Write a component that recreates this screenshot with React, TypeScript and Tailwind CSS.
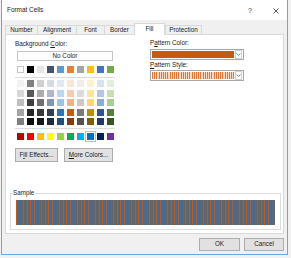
import React from "react";

const theme = ["#ffffff", "#000000", "#e7e6e6", "#44546a", "#5b9bd5", "#ed7d31", "#a5a5a5", "#ffc000", "#4472c4", "#70ad47"];
const tints = [
  ["#f2f2f2", "#808080", "#d0cece", "#d6dce4", "#deebf6", "#fbe5d5", "#ededed", "#fff2cc", "#d9e2f3", "#e2efd9"],
  ["#d8d8d8", "#595959", "#aeabab", "#adb9ca", "#bdd7ee", "#f7cbac", "#dbdbdb", "#fee599", "#b4c6e7", "#c5e0b3"],
  ["#bfbfbf", "#3f3f3f", "#757070", "#8496b0", "#9cc3e5", "#f4b183", "#c9c9c9", "#ffd965", "#8eaadb", "#a8d08d"],
  ["#a5a5a5", "#262626", "#3a3838", "#323f4f", "#2e75b5", "#c55a11", "#7b7b7b", "#bf9000", "#2f5496", "#538135"],
  ["#7f7f7f", "#0c0c0c", "#171616", "#222a35", "#1e4e79", "#833c0b", "#525252", "#7f6000", "#1f3864", "#375623"],
];
const standard = ["#c00000", "#ff0000", "#ffc000", "#ffff00", "#92d050", "#00b050", "#00b0f0", "#0070c0", "#002060", "#7030a0"];

function Swatch({ color, selected }: { color: string; selected?: boolean }) {
  const light = color === "#ffffff";
  return (
    <div
      className={
        "w-[7px] h-[7px] shrink-0 " +
        (light ? "border border-[#c6c6c6] " : "") +
        (selected ? "shadow-[0_0_0_1px_#ffffff,0_0_0_2px_#9cc8ef]" : "")
      }
      style={{ backgroundColor: color }}
    />
  );
}

function Chevron() {
  return (
    <svg width="5" height="3" viewBox="0 0 5 3">
      <polyline points="0.5,0.5 2.5,2.5 4.5,0.5" fill="none" stroke="#6a6a6a" strokeWidth="0.8" />
    </svg>
  );
}

function Combo({ fill }: { fill: string }) {
  return (
    <div className="w-[94px] h-[11px] border border-[#a9a9a9] bg-white flex items-stretch p-px gap-px">
      <div className={"flex-1 " + fill} />
      <div className="w-[7px] border border-[#d0d0d0] flex items-center justify-center -my-px">
        <Chevron />
      </div>
    </div>
  );
}

const tabs = [
  { label: "Number", w: "w-[32px]" },
  { label: "Alignment", w: "w-[39px]" },
  { label: "Font", w: "w-[28px]" },
  { label: "Border", w: "w-[30px]" },
  { label: "Fill", w: "w-[31px]", active: true },
  { label: "Protection", w: "w-[37px]" },
];

export default function App() {
  return (
    <div className="w-[291px] h-[258px] bg-[#f1f1f1] overflow-hidden font-['Liberation_Sans',Arial,sans-serif] text-[6.3px] leading-none text-[#1a1a1a]">
      <div className="ml-[1px] w-[287px] h-[255px] border-x border-b border-[#6aa6e0] bg-[#f0f0f0] flex flex-col">
        {/* Title bar */}
        <div className="h-[20px] bg-white flex items-center pl-[5px] pr-[8px] pt-px">
          <span className="text-[6.4px]">Format Cells</span>
          <span className="ml-auto text-[7px] text-[#333]">?</span>
          <svg className="ml-[21px]" width="6" height="6" viewBox="0 0 6 6">
            <path d="M0.5 0.5 L5.5 5.5 M5.5 0.5 L0.5 5.5" stroke="#333" strokeWidth="0.8" />
          </svg>
        </div>

        {/* Body */}
        <div className="flex-1 px-[3px] pt-[3px] flex flex-col">
          {/* Tabs */}
          <div className="flex items-end h-[12px] -mb-px relative z-10">
            {tabs.map((t) =>
              t.active ? (
                <div
                  key={t.label}
                  className={t.w + " h-[12px] bg-white border-x border-t border-[#d9d9d9] flex items-center justify-center"}
                >
                  {t.label}
                </div>
              ) : (
                <div
                  key={t.label}
                  className={t.w + " h-[10px] bg-[#f0f0f0] border-l border-t border-b border-[#d9d9d9] last:border-r flex items-center justify-center"}
                >
                  {t.label}
                </div>
              )
            )}
          </div>

          {/* Panel */}
          <div className="h-[200px] bg-white border border-[#d9d9d9] flex flex-col">
            <div className="flex">
              {/* Left column */}
              <div className="w-[144px] pl-[9px] pt-[5px] flex flex-col items-start">
                <div className="h-[8px] flex items-center">
                  Background&nbsp;<u>C</u>olor:
                </div>
                <div className="mt-[3px] ml-[2px] w-[96px] h-[10px] border border-[#c4c4c4] bg-white flex items-center justify-center">
                  No Color
                </div>
                <div className="mt-[5px] ml-[2px] flex gap-[3px]">
                  {theme.map((c, i) => (
                    <Swatch key={i} color={c} />
                  ))}
                </div>
                <div className="mt-[4px] w-[100px] h-px bg-[#dcdcdc]" />
                <div className="mt-[2px] ml-[2px] flex flex-col gap-[2.5px]">
                  {tints.map((row, r) => (
                    <div key={r} className="flex gap-[3px]">
                      {row.map((c, i) => (
                        <Swatch key={i} color={c} />
                      ))}
                    </div>
                  ))}
                </div>
                <div className="mt-[3px] w-[100px] h-px bg-[#dcdcdc]" />
                <div className="mt-[4px] ml-[2px] flex gap-[3px]">
                  {standard.map((c, i) => (
                    <Swatch key={i} color={c} selected={i === 7} />
                  ))}
                </div>
                <div className="mt-[8px] flex gap-[6px]">
                  <div className="w-[43px] h-[14px] border border-[#adadad] bg-[#e1e1e1] flex items-center justify-center">
                    F<u>i</u>ll Effects...
                  </div>
                  <div className="w-[49px] h-[14px] border border-[#adadad] bg-[#e1e1e1] flex items-center justify-center">
                    <u>M</u>ore Colors...
                  </div>
                </div>
              </div>

              {/* Right column */}
              <div className="pt-[4px] flex flex-col items-start">
                <div className="h-[8px] flex items-center">
                  P<u>a</u>ttern Color:
                </div>
                <div className="mt-[2px]">
                  <Combo fill="bg-[#c55a11]" />
                </div>
                <div className="mt-[1px] h-[8px] flex items-center">
                  <u>P</u>attern Style:
                </div>
                <div className="mt-[1px]">
                  <Combo fill="bg-[repeating-linear-gradient(90deg,#d9793a_0px,#d9793a_1px,#f7d9c4_1px,#f7d9c4_2.2px)]" />
                </div>
              </div>
            </div>

            {/* Sample */}
            <div className="mt-auto mb-[3px] ml-[4px] mr-[2px] relative border border-[#dcdcdc] pt-[6px] pb-[4px] px-[5px]">
              <span className="absolute left-[2px] -top-[4px] bg-white pr-px">Sample</span>
              <div className="h-[25px] bg-[repeating-linear-gradient(90deg,#c65911_0px,#c65911_0.9px,#5f6670_0.9px,#5f6670_1.8px,#2277c4_1.8px,#2277c4_2.7px,#66625e_2.7px,#66625e_3.6px)]" />
            </div>
          </div>

          {/* Footer */}
          <div className="mt-[4px] flex justify-end gap-[4px]">
            <div className="w-[41px] h-[13px] border border-[#adadad] bg-[#e1e1e1] flex items-center justify-center">
              OK
            </div>
            <div className="w-[40px] h-[13px] border border-[#adadad] bg-[#e1e1e1] flex items-center justify-center">
              Cancel
            </div>
          </div>
        </div>
      </div>
    </div>
  );
}
